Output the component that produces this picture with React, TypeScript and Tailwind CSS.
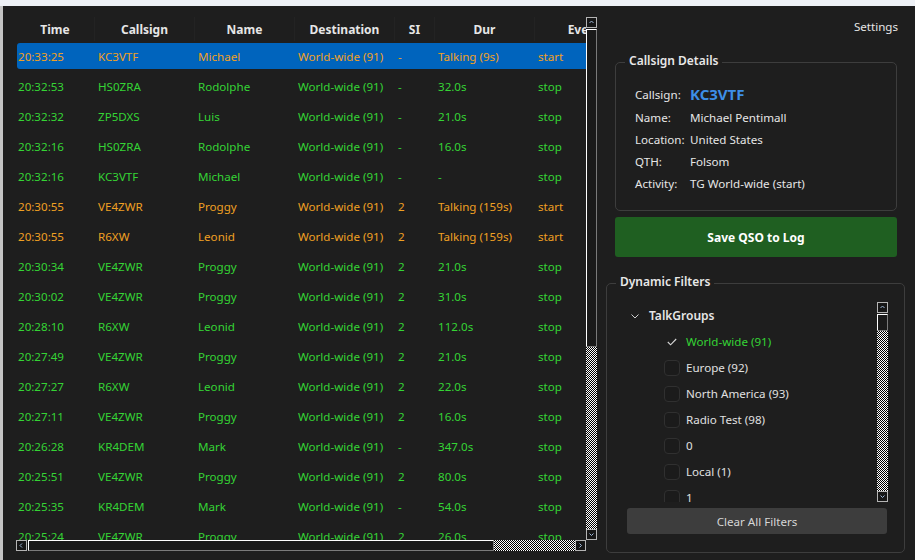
import React from "react";

type Row = {
  time: string;
  call: string;
  name: string;
  dest: string;
  si: string;
  dur: string;
  event: string;
};

const ROWS: Row[] = [
  { time: "20:33:25", call: "KC3VTF", name: "Michael", dest: "World-wide (91)", si: "-", dur: "Talking (9s)", event: "start" },
  { time: "20:32:53", call: "HS0ZRA", name: "Rodolphe", dest: "World-wide (91)", si: "-", dur: "32.0s", event: "stop" },
  { time: "20:32:32", call: "ZP5DXS", name: "Luis", dest: "World-wide (91)", si: "-", dur: "21.0s", event: "stop" },
  { time: "20:32:16", call: "HS0ZRA", name: "Rodolphe", dest: "World-wide (91)", si: "-", dur: "16.0s", event: "stop" },
  { time: "20:32:16", call: "KC3VTF", name: "Michael", dest: "World-wide (91)", si: "-", dur: "-", event: "stop" },
  { time: "20:30:55", call: "VE4ZWR", name: "Proggy", dest: "World-wide (91)", si: "2", dur: "Talking (159s)", event: "start" },
  { time: "20:30:55", call: "R6XW", name: "Leonid", dest: "World-wide (91)", si: "2", dur: "Talking (159s)", event: "start" },
  { time: "20:30:34", call: "VE4ZWR", name: "Proggy", dest: "World-wide (91)", si: "2", dur: "21.0s", event: "stop" },
  { time: "20:30:02", call: "VE4ZWR", name: "Proggy", dest: "World-wide (91)", si: "2", dur: "31.0s", event: "stop" },
  { time: "20:28:10", call: "R6XW", name: "Leonid", dest: "World-wide (91)", si: "2", dur: "112.0s", event: "stop" },
  { time: "20:27:49", call: "VE4ZWR", name: "Proggy", dest: "World-wide (91)", si: "2", dur: "21.0s", event: "stop" },
  { time: "20:27:27", call: "R6XW", name: "Leonid", dest: "World-wide (91)", si: "2", dur: "22.0s", event: "stop" },
  { time: "20:27:11", call: "VE4ZWR", name: "Proggy", dest: "World-wide (91)", si: "2", dur: "16.0s", event: "stop" },
  { time: "20:26:28", call: "KR4DEM", name: "Mark", dest: "World-wide (91)", si: "-", dur: "347.0s", event: "stop" },
  { time: "20:25:51", call: "VE4ZWR", name: "Proggy", dest: "World-wide (91)", si: "2", dur: "80.0s", event: "stop" },
  { time: "20:25:35", call: "KR4DEM", name: "Mark", dest: "World-wide (91)", si: "-", dur: "54.0s", event: "stop" },
  { time: "20:25:24", call: "VE4ZWR", name: "Proggy", dest: "World-wide (91)", si: "2", dur: "26.0s", event: "stop" },
];

const TALKGROUPS = [
  { label: "World-wide (91)", checked: true },
  { label: "Europe (92)", checked: false },
  { label: "North America (93)", checked: false },
  { label: "Radio Test (98)", checked: false },
  { label: "0", checked: false },
  { label: "Local (1)", checked: false },
  { label: "1", checked: false },
];

const checker =
  "bg-[image:conic-gradient(#fff_25%,#000_0_50%,#fff_0_75%,#000_0)] bg-[length:2px_2px]";

const thumb =
  "border-t border-l border-r border-b border-t-white border-l-white border-r-[#7a7a7a] border-b-[#7a7a7a] bg-[#1a1a1a]";

function Arrow({ dir }: { dir: "up" | "down" | "left" | "right" }) {
  const d = {
    up: "M1.5 4 L3.5 2 L5.5 4",
    down: "M1.5 2.5 L3.5 4.5 L5.5 2.5",
    left: "M4 1.5 L2 3.5 L4 5.5",
    right: "M2.5 1.5 L4.5 3.5 L2.5 5.5",
  }[dir];
  return (
    <div className="flex h-[11px] w-[11px] shrink-0 items-center justify-center border border-[#b4b4b4] bg-[#161616]">
      <svg width="7" height="7" viewBox="0 0 7 7">
        <path d={d} fill="none" stroke="#9fb8d8" strokeWidth="1" />
      </svg>
    </div>
  );
}

function GroupBox({
  title,
  className,
  children,
}: {
  title: string;
  className?: string;
  children: React.ReactNode;
}) {
  return (
    <div className={`relative rounded-[5px] border border-[#3d3d3d] ${className ?? ""}`}>
      <div className="absolute -top-[10px] left-[9px] bg-[#1e1e1e] px-[4px] text-[12px] leading-[16px] font-semibold text-[#e8e8e8]">
        {title}
      </div>
      {children}
    </div>
  );
}

export default function App() {
  const cols = [
    { key: "time", label: "Time", w: "w-[79px]", pl: "pl-[2px]" },
    { key: "call", label: "Callsign", w: "w-[100px]", pl: "pl-[3px]" },
    { key: "name", label: "Name", w: "w-[100px]", pl: "pl-[3px]" },
    { key: "dest", label: "Destination", w: "w-[100px]", pl: "pl-[3px]" },
    { key: "si", label: "SI", w: "w-[40px]", pl: "pl-[3px]" },
    { key: "dur", label: "Dur", w: "w-[100px]", pl: "pl-[3px]" },
    { key: "event", label: "Event", w: "w-[100px]", pl: "pl-[3px]" },
  ] as const;

  return (
    <div
      className="flex h-[560px] w-[915px] flex-col overflow-hidden bg-[#1e1e1e] text-[11.6px] text-[#e0e0e0]"
      style={{ fontFamily: '"Noto Sans", "Open Sans", sans-serif' }}
    >
      <div className="h-[6px] shrink-0 bg-[#eef1f6]" />
      <div className="flex min-h-0 flex-1">
        <div className="w-[3px] shrink-0 bg-[#c4c4c4]" />

        {/* TABLE */}
        <div className="w-[603px] shrink-0 pt-[11px] pl-[13px]">
          <div className="grid h-[534px] w-[581px] grid-cols-[570px_11px] grid-rows-[523px_11px]">
            <div className="overflow-hidden">
              <div className="flex h-[24px] w-[619px]">
                {cols.map((c) => (
                  <div
                    key={c.key}
                    className={`${c.w} flex shrink-0 items-center justify-center border-r border-[#232323] pt-[2px] text-[12px] font-bold text-[#e6e6e6]`}
                  >
                    {c.label}
                  </div>
                ))}
              </div>
              {ROWS.map((r, i) => {
                const active = r.event === "start";
                const color = active ? "text-[#f0a023]" : "text-[#35d435]";
                return (
                  <div key={i} className="h-[30px] py-[2px] pl-[1px]">
                    <div
                      className={`flex h-[26px] w-[620px] items-center rounded-l-[3px] pt-[2px] ${
                        i === 0 ? "bg-[#0064bd]" : ""
                      } ${color}`}
                    >
                      {cols.map((c, j) => (
                        <div
                          key={c.key}
                          className={`${j === 0 ? "w-[78px] pl-[1px]" : `${c.w} ${c.pl}`} shrink-0 whitespace-nowrap`}
                        >
                          {r[c.key]}
                        </div>
                      ))}
                    </div>
                  </div>
                );
              })}
            </div>

            {/* vertical scrollbar */}
            <div className="flex flex-col">
              <Arrow dir="up" />
              <div className={`mt-[1px] h-[318px] ${thumb}`} />
              <div className={`flex-1 ${checker}`} />
              <Arrow dir="down" />
            </div>

            {/* horizontal scrollbar */}
            <div className="flex">
              <Arrow dir="left" />
              <div className={`ml-[1px] w-[466px] ${thumb}`} />
              <div className={`flex-1 ${checker}`} />
              <Arrow dir="right" />
            </div>
            <div />
          </div>
        </div>

        {/* RIGHT PANEL */}
        <div className="flex w-[309px] shrink-0 flex-col">
          <div className="mt-[13px] pr-[17px] text-right leading-[16px] text-[#e6e6e6]">Settings</div>

          <GroupBox title="Callsign Details" className="mt-[27px] ml-[9px] h-[149px] w-[282px]">
            <div className="pt-[19px] pl-[19px] text-[#e6e6e6]">
              <div className="flex h-[25px] items-center">
                <span className="w-[55px]">Callsign:</span>
                <span className="text-[15px] font-bold text-[#3d8fe8]">KC3VTF</span>
              </div>
              {[
                ["Name:", "Michael Pentimall"],
                ["Location:", "United States"],
                ["QTH:", "Folsom"],
                ["Activity:", "TG World-wide (start)"],
              ].map(([k, v]) => (
                <div key={k} className="flex h-[22px] items-center">
                  <span className="w-[55px]">{k}</span>
                  <span>{v}</span>
                </div>
              ))}
            </div>
          </GroupBox>

          <button className="mt-[6px] ml-[9px] h-[40px] w-[282px] rounded-[3px] bg-[#1f5f21] pt-[2px] text-[12px] font-bold text-white">
            Save QSO to Log
          </button>

          <GroupBox title="Dynamic Filters" className="mt-[26px] h-[270px] w-[299px]">
            <div className="pt-[18px] pl-[14px]">
              <div className="grid h-[200px] w-[267px] grid-cols-[256px_11px]">
                <div className="overflow-hidden pt-[1px]">
                  <div className="flex h-[26px] items-center">
                    <svg width="8" height="5" viewBox="0 0 8 5" className="ml-[10px]">
                      <path d="M0.5 0.5 L4 4 L7.5 0.5" fill="none" stroke="#cfcfcf" strokeWidth="1" />
                    </svg>
                    <span className="ml-[10px] text-[12px] font-semibold text-[#e6e6e6]">TalkGroups</span>
                  </div>
                  {TALKGROUPS.map((t) => (
                    <div key={t.label} className="flex h-[26px] items-center pl-[43px]">
                      {t.checked ? (
                        <div className="flex h-[16px] w-[16px] items-center justify-center">
                          <svg width="10" height="8" viewBox="0 0 10 8">
                            <path d="M0.8 4 L3.6 6.8 L9.2 1" fill="none" stroke="#d8d8d8" strokeWidth="1.1" />
                          </svg>
                        </div>
                      ) : (
                        <div className="h-[16px] w-[16px] rounded-[4px] border border-[#303030] bg-[#1b1b1b]" />
                      )}
                      <span className={`ml-[6px] ${t.checked ? "text-[#35d435]" : "text-[#e0e0e0]"}`}>
                        {t.label}
                      </span>
                    </div>
                  ))}
                </div>
                <div className="flex flex-col">
                  <Arrow dir="up" />
                  <div className={`mt-[1px] h-[17px] ${thumb}`} />
                  <div className={`flex-1 ${checker}`} />
                  <Arrow dir="down" />
                </div>
              </div>
              <button className="mt-[6px] ml-[6px] h-[26px] w-[260px] rounded-[3px] bg-[#3d3d3d] pt-[1px] text-[#d6d6d6]">
                Clear All Filters
              </button>
            </div>
          </GroupBox>
        </div>
      </div>
    </div>
  );
}
